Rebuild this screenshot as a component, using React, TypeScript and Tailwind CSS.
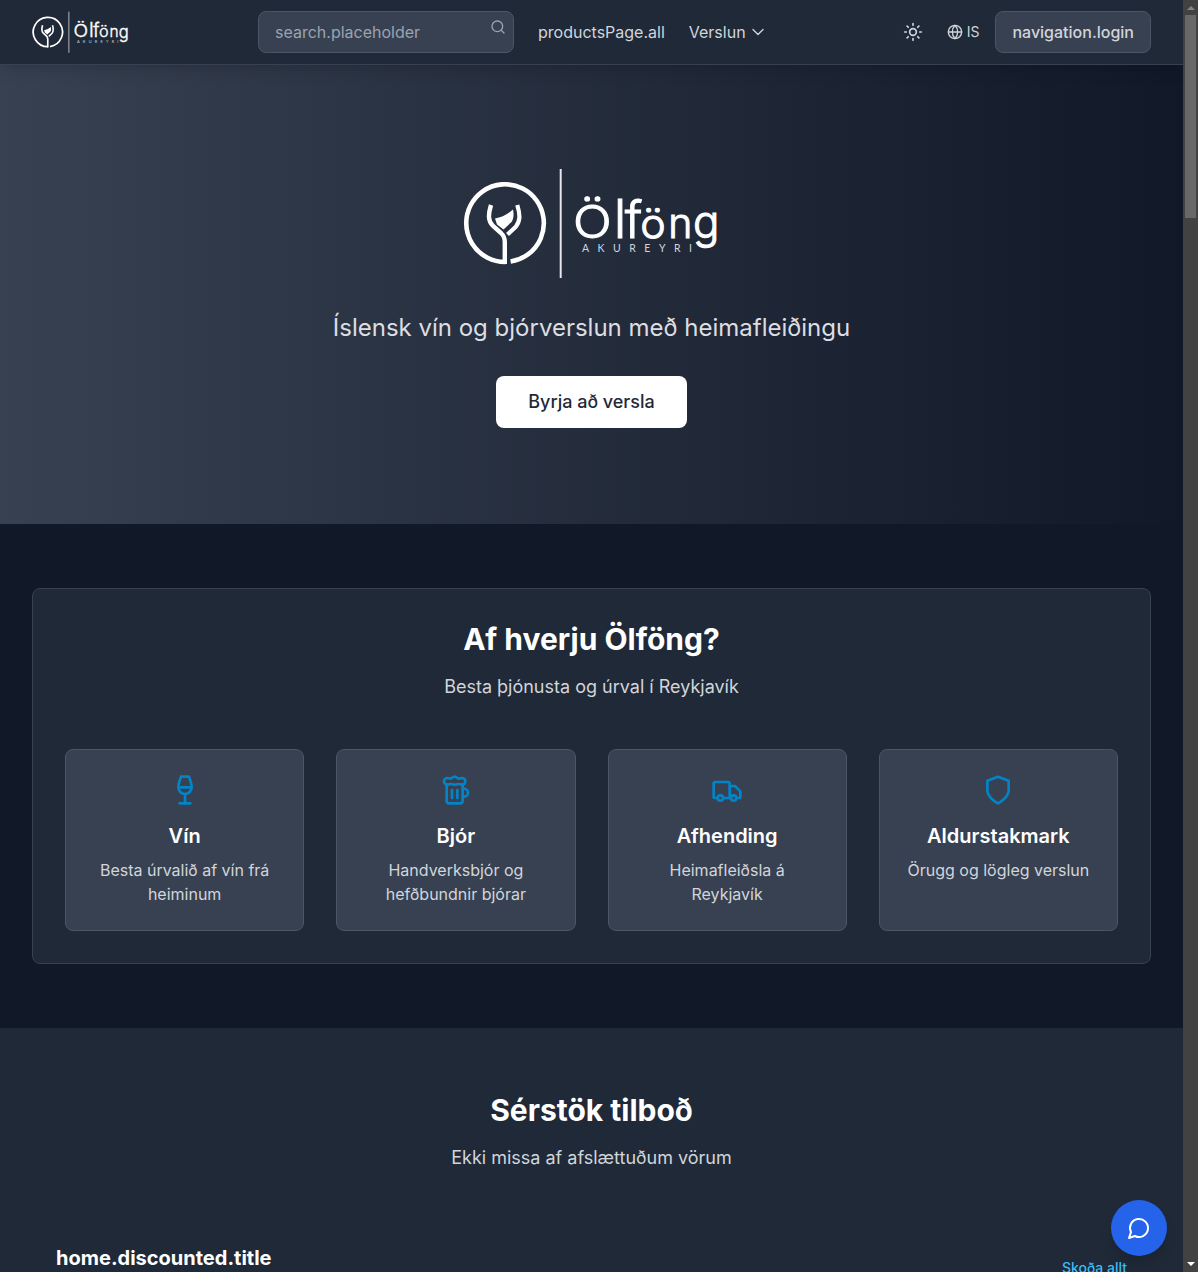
import React from "react";
import { Wine, Beer, Search, Sun, Globe } from "lucide-react";

function Logo({ className }: { className: string }) {
  return (
    <svg viewBox="0 0 257 110" className={className} fill="none" aria-label="Ölföng Akureyri">
      <path d="M42.300 93.900 A38.800 38.800 0 1 1 47.600 93.500" stroke="#fff" strokeWidth="4.600" />
      <path d="M28 37 C25 47 25 53 30 58 L38 65 Q41.800 68.500 41.800 74 V96" stroke="#fff" strokeWidth="4.400" />
      <path d="M54.300 37 C57.300 47 57.300 53 53 58.500 L44.500 66.500" stroke="#fff" strokeWidth="4.200" />
      <path d="M32 50.500 Q42 48.500 50 41.500 Q51.500 49 49 53.500 L40.500 61.500 L34 56.500 Z" fill="#fff" />
      <path d="M97.700 1 V110" stroke="#e5e7eb" strokeWidth="2" />
      <g fill="#fff" stroke="#fff" strokeWidth="1" fontFamily="Inter, sans-serif" fontWeight="300">
        <text transform="translate(110 69.500) scale(1.120 1)" fontSize="45.500">Ö</text>
        <text y="69.500">
          <tspan x="150.700" fontSize="54">l</tspan>
          <tspan x="161.700" fontSize="51">f</tspan>
        </text>
        <text transform="translate(177.300 69.500) scale(1.060 1)" fontSize="40.500">ö</text>
        <text transform="translate(205.300 69.500)" fontSize="41">n</text>
        <text transform="translate(230 70) scale(1.020 1.060)" fontSize="43">g</text>
      </g>
      <text x="119" y="84" textLength="110" fill="#d1d5db" fontFamily="Lato, sans-serif" fontSize="10.500">AKUREYRI</text>
    </svg>
  );
}

const stroke = {
  viewBox: "0 0 24 24",
  fill: "none",
  stroke: "currentColor",
  strokeLinecap: "round" as const,
  strokeLinejoin: "round" as const,
};

function Truck() {
  return (
    <svg {...stroke} strokeWidth="2" className="size-8">
      <path d="M5 18H3c-.6 0-1-.4-1-1V7c0-.6.4-1 1-1h10c.6 0 1 .4 1 1v11" />
      <path d="M14 9h4l4 4v4c0 .6-.4 1-1 1h-2" />
      <circle cx="7" cy="18" r="2" />
      <path d="M15 18H9" />
      <circle cx="17" cy="18" r="2" />
    </svg>
  );
}

function Shield() {
  return (
    <svg {...stroke} strokeWidth="2" className="size-8">
      <path d="M12 22s8-4 8-10V5l-8-3-8 3v7c0 6 8 10 8 10" />
    </svg>
  );
}

const features = [
  { icon: <Wine className="size-8" />, title: "Vín", text: "Besta úrvalið af vín frá heiminum" },
  { icon: <Beer className="size-8" />, title: "Bjór", text: "Handverksbjór og hefðbundnir bjórar" },
  { icon: <Truck />, title: "Afhending", text: "Heimafleiðsla á Reykjavík" },
  { icon: <Shield />, title: "Aldurstakmark", text: "Örugg og lögleg verslun" },
];

function Header() {
  return (
    <header className="relative z-10 flex h-[65px] items-center border-b border-[#374151] bg-[#1f2937] px-8 text-base text-[#d1d5db] shadow-lg">
      <Logo className="h-[42px] w-[97px]" />
      <div className="relative ml-[129px] h-[42px] w-64 rounded-lg border border-[#4b5563] bg-[#374151] px-4 py-2 leading-6 text-[#9ca3af]">
        search.placeholder
        <Search className="absolute right-[7px] top-[7px] size-4" />
      </div>
      <nav className="ml-6 flex items-center gap-6">
        <span>productsPage.all</span>
        <span className="flex items-center gap-1">
          Verslun
          <svg {...stroke} strokeWidth="2" className="size-4">
            <path d="m19.500 8.250-7.500 7.500-7.500-7.500" />
          </svg>
        </span>
      </nav>
      <div className="ml-auto flex items-center">
        <Sun className="mr-6 size-5" />
        <Globe className="mr-1 size-4" />
        <span className="mr-4 text-sm">IS</span>
        <button className="h-[42px] rounded-lg border border-[#4b5563] bg-[#374151] px-4 font-medium">navigation.login</button>
      </div>
    </header>
  );
}

export default function App() {
  return (
    <div className="flex h-[1272px] w-[1198px] overflow-hidden bg-[#111827] font-['Inter',sans-serif]">
      <main className="relative w-[1183px] shrink-0 overflow-hidden">
        <Header />
        <section className="flex h-[459px] flex-col items-center bg-[linear-gradient(to_right,#374151,#111827)] pt-[103px]">
          <Logo className="h-[110px] w-[257px]" />
          <p className="mt-[34px] text-2xl leading-8 text-[#dcdee2]">Íslensk vín og bjórverslun með heimafleiðingu</p>
          <button className="mt-8 h-[52px] rounded-lg bg-white px-8 text-lg font-medium text-[#1f2937]">Byrja að versla</button>
        </section>
        <section className="px-8 py-16">
          <div className="rounded-lg border border-[#374151] bg-[#1f2937] p-8 text-center">
            <h2 className="text-3xl leading-9 font-bold text-white">Af hverju Ölföng?</h2>
            <p className="mt-4 text-lg leading-7 text-[#d1d5db]">Besta þjónusta og úrval í Reykjavík</p>
            <div className="mt-12 grid grid-cols-4 gap-8">
              {features.map((f) => (
                <div key={f.title} className="flex h-[182px] flex-col items-center rounded-lg border border-[#4b5563] bg-[#374151] p-6">
                  <span className="text-[#0284c7]">{f.icon}</span>
                  <h3 className="mt-4 text-xl leading-7 font-semibold text-white">{f.title}</h3>
                  <p className="mt-2 text-base leading-6 text-[#d1d5db]">{f.text}</p>
                </div>
              ))}
            </div>
          </div>
        </section>
        <section className="h-[400px] bg-[#1f2937] px-8 pt-16 text-center">
          <h2 className="text-3xl leading-9 font-bold text-white">Sérstök tilboð</h2>
          <p className="mt-4 text-lg leading-7 text-[#d1d5db]">Ekki missa af afslættuðum vörum</p>
          <div className="mt-12 flex justify-between p-6">
            <h3 className="text-xl leading-7 font-bold text-white">home.discounted.title</h3>
            <a className="mt-[14px] text-sm font-medium text-[#38bdf8]">Skoða allt</a>
          </div>
        </section>
        <button className="absolute right-4 bottom-4 flex size-14 items-center justify-center rounded-full bg-[#2563eb] text-white shadow-lg">
          <svg {...stroke} strokeWidth="2" className="size-6">
            <path d="M7.900 20A9 9 0 1 0 4 16.100L2 22Z" />
          </svg>
        </button>
      </main>
      <aside className="flex w-[15px] shrink-0 flex-col items-center bg-[#424242]">
        <div className="flex h-[15px] items-center">
          <svg viewBox="0 0 8 4" className="mt-px h-1 w-2"><path d="M0 4L4 0L8 4Z" fill="#858585" /></svg>
        </div>
        <div className="h-[203px] w-[11px] bg-[#686868]" />
        <div className="mt-auto flex h-[15px] items-center">
          <svg viewBox="0 0 8 4" className="mb-px h-1 w-2"><path d="M0 0H8L4 4Z" fill="#fff" /></svg>
        </div>
      </aside>
    </div>
  );
}
